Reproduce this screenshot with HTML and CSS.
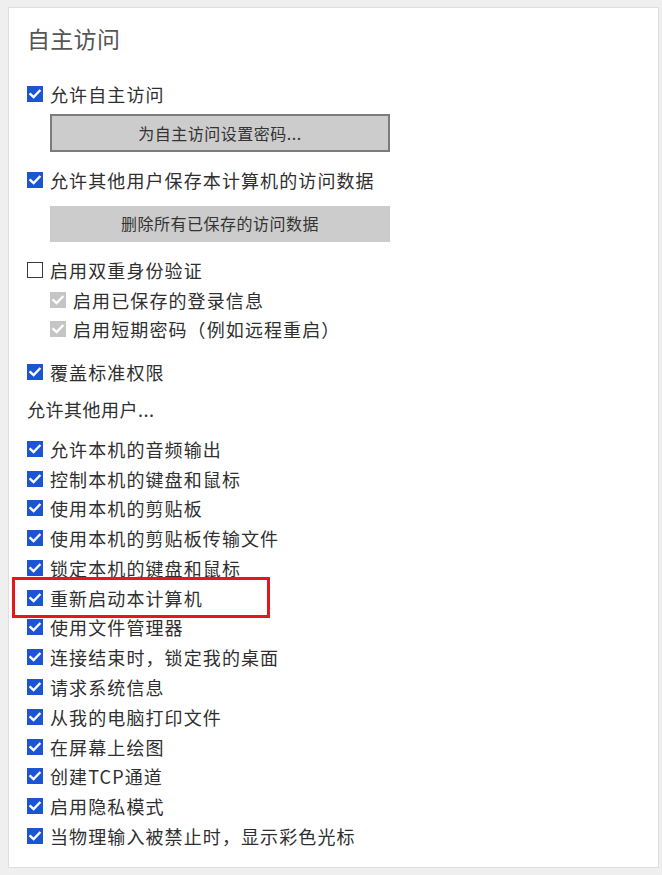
FILE: index.html
```html
<!DOCTYPE html>
<html lang="zh-CN">
<head>
<meta charset="utf-8">
<title>自主访问</title>
<link rel="stylesheet" href="styles.css">
</head>
<body>
<div class="panel">
  <div class="title">自主访问</div>

  <div class="row r1"><span class="cb on"><svg viewBox="0 0 16 16"><polyline points="3.4,8.1 6.6,11.1 12.6,4.9"/></svg></span><span class="lbl">允许自主访问</span></div>
  <div class="btn bordered">为自主访问设置密码...</div>

  <div class="row r2"><span class="cb on"><svg viewBox="0 0 16 16"><polyline points="3.4,8.1 6.6,11.1 12.6,4.9"/></svg></span><span class="lbl">允许其他用户保存本计算机的访问数据</span></div>
  <div class="btn flat">删除所有已保存的访问数据</div>

  <div class="row r3"><span class="cb off"></span><span class="lbl">启用双重身份验证</span></div>
  <div class="row sub"><span class="cb dis"><svg viewBox="0 0 16 16"><polyline points="3.4,8.1 6.6,11.1 12.6,4.9"/></svg></span><span class="lbl">启用已保存的登录信息</span></div>
  <div class="row sub"><span class="cb dis"><svg viewBox="0 0 16 16"><polyline points="3.4,8.1 6.6,11.1 12.6,4.9"/></svg></span><span class="lbl">启用短期密码（例如远程重启）</span></div>

  <div class="row r4"><span class="cb on"><svg viewBox="0 0 16 16"><polyline points="3.4,8.1 6.6,11.1 12.6,4.9"/></svg></span><span class="lbl">覆盖标准权限</span></div>

  <div class="section">允许其他用户...</div>

  <div class="list">
    <div class="row li"><span class="cb on"><svg viewBox="0 0 16 16"><polyline points="3.4,8.1 6.6,11.1 12.6,4.9"/></svg></span><span class="lbl">允许本机的音频输出</span></div>
    <div class="row li"><span class="cb on"><svg viewBox="0 0 16 16"><polyline points="3.4,8.1 6.6,11.1 12.6,4.9"/></svg></span><span class="lbl">控制本机的键盘和鼠标</span></div>
    <div class="row li"><span class="cb on"><svg viewBox="0 0 16 16"><polyline points="3.4,8.1 6.6,11.1 12.6,4.9"/></svg></span><span class="lbl">使用本机的剪贴板</span></div>
    <div class="row li"><span class="cb on"><svg viewBox="0 0 16 16"><polyline points="3.4,8.1 6.6,11.1 12.6,4.9"/></svg></span><span class="lbl">使用本机的剪贴板传输文件</span></div>
    <div class="row li"><span class="cb on"><svg viewBox="0 0 16 16"><polyline points="3.4,8.1 6.6,11.1 12.6,4.9"/></svg></span><span class="lbl">锁定本机的键盘和鼠标</span></div>
    <div class="row li marked"><span class="cb on"><svg viewBox="0 0 16 16"><polyline points="3.4,8.1 6.6,11.1 12.6,4.9"/></svg></span><span class="lbl">重新启动本计算机</span><span class="highlight"></span></div>
    <div class="row li"><span class="cb on"><svg viewBox="0 0 16 16"><polyline points="3.4,8.1 6.6,11.1 12.6,4.9"/></svg></span><span class="lbl">使用文件管理器</span></div>
    <div class="row li"><span class="cb on"><svg viewBox="0 0 16 16"><polyline points="3.4,8.1 6.6,11.1 12.6,4.9"/></svg></span><span class="lbl">连接结束时，锁定我的桌面</span></div>
    <div class="row li"><span class="cb on"><svg viewBox="0 0 16 16"><polyline points="3.4,8.1 6.6,11.1 12.6,4.9"/></svg></span><span class="lbl">请求系统信息</span></div>
    <div class="row li"><span class="cb on"><svg viewBox="0 0 16 16"><polyline points="3.4,8.1 6.6,11.1 12.6,4.9"/></svg></span><span class="lbl">从我的电脑打印文件</span></div>
    <div class="row li"><span class="cb on"><svg viewBox="0 0 16 16"><polyline points="3.4,8.1 6.6,11.1 12.6,4.9"/></svg></span><span class="lbl">在屏幕上绘图</span></div>
    <div class="row li"><span class="cb on"><svg viewBox="0 0 16 16"><polyline points="3.4,8.1 6.6,11.1 12.6,4.9"/></svg></span><span class="lbl">创建TCP通道</span></div>
    <div class="row li"><span class="cb on"><svg viewBox="0 0 16 16"><polyline points="3.4,8.1 6.6,11.1 12.6,4.9"/></svg></span><span class="lbl">启用隐私模式</span></div>
    <div class="row li"><span class="cb on"><svg viewBox="0 0 16 16"><polyline points="3.4,8.1 6.6,11.1 12.6,4.9"/></svg></span><span class="lbl">当物理输入被禁止时，显示彩色光标</span></div>
  </div>
</div>
</body>
</html>
```

FILE: styles.css
```css
html, body {
  margin: 0;
  padding: 0;
}
body {
  background: #efefef;
  font-family: "Noto Sans CJK SC", "Noto Sans", sans-serif;
  color: #2f2f2f;
  width: 662px;
  height: 875px;
  overflow: hidden;
}
.panel {
  margin: 7px 3px 0 8px;
  height: 861px;
  box-sizing: border-box;
  background: #ffffff;
  border: 1px solid #dedede;
  padding: 10px 0 0 18px;
  display: flex;
  flex-direction: column;
  align-items: flex-start;
}
.title {
  height: 40px;
  line-height: 40px;
  font-size: 23px;
  color: #555555;
  letter-spacing: 0.3px;
}
.row {
  display: flex;
  align-items: center;
  height: 30px;
  font-size: 18px;
  letter-spacing: 1.1px;
  white-space: nowrap;
}
.lbl {
  line-height: 30px;
}
.cb {
  width: 16px;
  height: 16px;
  box-sizing: border-box;
  margin-right: 7px;
  flex: none;
  display: block;
}
.cb svg {
  display: block;
  width: 16px;
  height: 16px;
}
.cb svg polyline {
  fill: none;
  stroke: #ffffff;
  stroke-width: 2.3;
  stroke-linecap: square;
  stroke-linejoin: miter;
}
.cb.on {
  background: #1b55d4;
}
.cb.dis {
  background: #c5c5c5;
}
.cb.off {
  border: 1.5px solid #3a3a3a;
  background: #ffffff;
}
.r1 { margin-top: 21px; }
.btn {
  width: 340px;
  box-sizing: border-box;
  margin-left: 23px;
  background: #cccccc;
  font-size: 16px;
  color: #333333;
  text-align: center;
  letter-spacing: 0.5px;
}
.btn.bordered {
  margin-top: 5px;
  height: 38px;
  line-height: 34px;
  border: 2px solid #7c7c7c;
}
.btn.flat {
  margin-top: 11px;
  height: 36px;
  line-height: 35px;
}
.r2 { margin-top: 13px; }
.r3 { margin-top: 13px; }
.sub {
  height: 29px;
  padding-left: 23px;
}
.sub .cb { margin-right: 7px; }
.r4 { margin-top: 14px; }
.section {
  margin-top: 7px;
  height: 30px;
  line-height: 30px;
  font-size: 18px;
  letter-spacing: 0.5px;
}
.list {
  margin-top: 10px;
  display: flex;
  flex-direction: column;
}
.li {
  height: 29.77px;
}
.marked {
  position: relative;
}
.highlight {
  position: absolute;
  left: -15px;
  top: -6px;
  width: 258px;
  height: 41px;
  box-sizing: border-box;
  border: 3px solid #e2181d;
  pointer-events: none;
}
```
